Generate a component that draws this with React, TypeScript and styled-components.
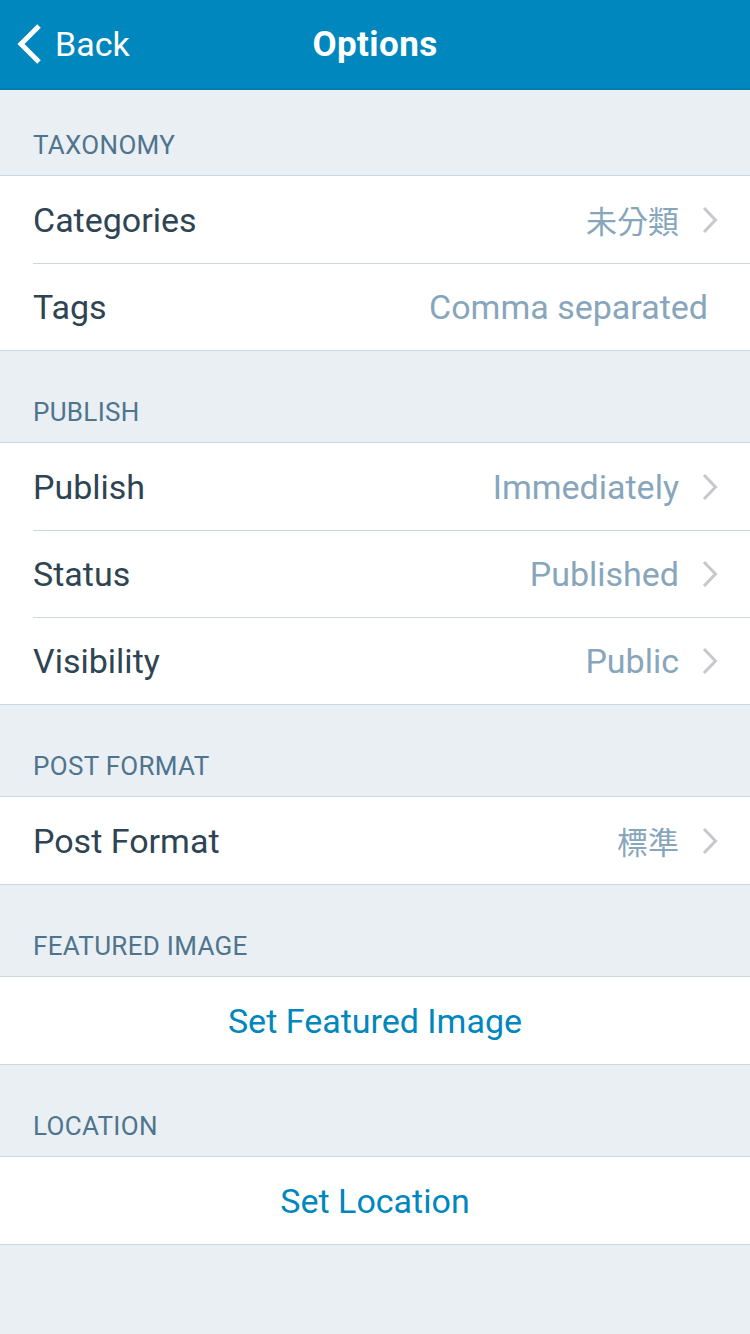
import React from 'react'
import styled, { createGlobalStyle } from 'styled-components'

const GlobalStyle = createGlobalStyle`
  html, body {
    margin: 0;
    padding: 0;
    background: #e9eff3;
  }
  body {
    font-family: Roboto, 'Noto Sans CJK TC', sans-serif;
    -webkit-font-smoothing: antialiased;
  }
`

const Page = styled.div`
  width: 750px;
  min-height: 1334px;
  background: #e9eff3;
`

const NavBar = styled.header`
  height: 88px;
  background: #0087be;
  border-bottom: 2px solid #007eb1;
  display: grid;
  grid-template-columns: 1fr auto 1fr;
  align-items: center;
  color: #fff;
`

const BackButton = styled.div`
  display: flex;
  align-items: center;
  gap: 12px;
  padding-left: 16px;
  font-size: 34px;
  line-height: 1;
`

const Title = styled.h1`
  margin: 0;
  font-size: 35px;
  font-weight: 700;
  letter-spacing: 0.4px;
`

const SectionHeader = styled.div<{ first?: boolean }>`
  height: ${p => (p.first ? 85 : 91)}px;
  box-sizing: border-box;
  display: flex;
  align-items: flex-end;
  padding: 0 33px 17px;
  font-size: 26px;
  letter-spacing: 0.3px;
  color: #4f748e;
  text-transform: uppercase;
  line-height: 1;
`

const Group = styled.div`
  background: #fff;
  border-top: 1px solid #c8d7e1;
  border-bottom: 1px solid #c8d7e1;
`

const Row = styled.div`
  height: 87px;
  box-sizing: border-box;
  display: flex;
  align-items: center;
  padding-left: 33px;
  position: relative;

  & + &::before {
    content: '';
    position: absolute;
    top: 0;
    left: 33px;
    right: 0;
    height: 1px;
    background: #c8d7e1;
  }
`

const Label = styled.span`
  flex: 1;
  font-size: 34px;
  color: #2e4453;
`

const Value = styled.span<{ plain?: boolean; cjk?: boolean }>`
  font-size: ${p => (p.cjk ? 31 : 34)}px;
  color: #87a6bc;
  margin-right: ${p => (p.plain ? 42 : 0)}px;
`

const Chevron = styled.svg`
  width: 16px;
  height: 28px;
  margin: 0 32px 0 23px;
  flex-shrink: 0;
`

const LinkRow = styled.div`
  height: 87px;
  display: flex;
  align-items: center;
  justify-content: center;
  font-size: 34px;
  color: #0087be;
`

const RightArrow = () => (
  <Chevron viewBox="0 0 16 28">
    <path d="M2 2 L13.5 14 L2 26" fill="none" stroke="#c7c7cc" strokeWidth="3" />
  </Chevron>
)

type Item = { label: string; value: string; arrow?: boolean; cjk?: boolean }

const taxonomy: Item[] = [
  { label: 'Categories', value: '未分類', arrow: true, cjk: true },
  { label: 'Tags', value: 'Comma separated' },
]

const publish: Item[] = [
  { label: 'Publish', value: 'Immediately', arrow: true },
  { label: 'Status', value: 'Published', arrow: true },
  { label: 'Visibility', value: 'Public', arrow: true },
]

const format: Item[] = [{ label: 'Post Format', value: '標準', arrow: true, cjk: true }]

const Rows = ({ items }: { items: Item[] }) => (
  <Group>
    {items.map(item => (
      <Row key={item.label}>
        <Label>{item.label}</Label>
        <Value plain={!item.arrow} cjk={item.cjk}>
          {item.value}
        </Value>
        {item.arrow && <RightArrow />}
      </Row>
    ))}
  </Group>
)

const App: React.FC = () => {
  return (
    <>
      <GlobalStyle />
      <Page>
        <NavBar>
          <BackButton>
            <svg width="27" height="42" viewBox="0 0 27 42">
              <path d="M23 3 L5 21 L23 39" fill="none" stroke="#fff" strokeWidth="5" />
            </svg>
            Back
          </BackButton>
          <Title>Options</Title>
          <div />
        </NavBar>

        <SectionHeader first>Taxonomy</SectionHeader>
        <Rows items={taxonomy} />

        <SectionHeader>Publish</SectionHeader>
        <Rows items={publish} />

        <SectionHeader>Post Format</SectionHeader>
        <Rows items={format} />

        <SectionHeader>Featured Image</SectionHeader>
        <Group>
          <LinkRow>Set Featured Image</LinkRow>
        </Group>

        <SectionHeader>Location</SectionHeader>
        <Group>
          <LinkRow>Set Location</LinkRow>
        </Group>
      </Page>
    </>
  )
}

export default App
